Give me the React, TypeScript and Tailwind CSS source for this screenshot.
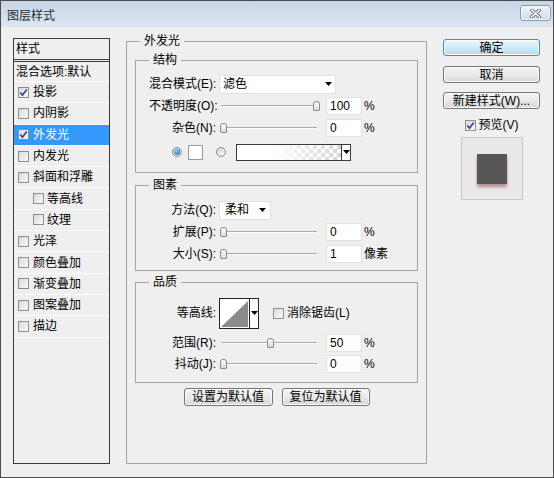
import type { ReactNode } from "react";

const styles = [
  { label: "投影", checked: true },
  { label: "内阴影" },
  { label: "外发光", checked: true, active: true },
  { label: "内发光" },
  { label: "斜面和浮雕" },
  { label: "等高线", indent: true },
  { label: "纹理", indent: true },
  { label: "光泽" },
  { label: "颜色叠加" },
  { label: "渐变叠加" },
  { label: "图案叠加" },
  { label: "描边" },
];

const Arrow = () => (
  <svg width="7" height="4" viewBox="0 0 7 4">
    <path d="M0 0H7L3.5 4Z" fill="#000" />
  </svg>
);

const Check = ({ checked = false }: { checked?: boolean }) => (
  <span className="flex h-[11px] w-[11px] shrink-0 items-center justify-center border border-[#8f8f8f] bg-linear-to-br from-[#d9d9d9] to-[#fbfbfb]">
    {checked && (
      <svg width="9" height="9" viewBox="0 0 9 9">
        <path d="M1.3 4.6L3.4 7.2L7.8 1.4" fill="none" stroke="#2a3f96" strokeWidth="1.6" />
      </svg>
    )}
  </span>
);

const Radio = ({ on = false }: { on?: boolean }) => (
  <span className="flex h-[10px] w-[10px] shrink-0 items-center justify-center rounded-full border border-[#8c8c8c] bg-linear-to-br from-[#cfcfcf] to-[#fafafa]">
    {on && (
      <span className="h-[6px] w-[6px] rounded-full bg-[radial-gradient(circle_at_35%_35%,#8fdcff,#1b73b8_75%)]" />
    )}
  </span>
);

const Slider = ({ value }: { value: number }) => (
  <div className="relative ml-[3px] h-[12px] w-[101px] shrink-0">
    <div className="absolute left-[2px] right-[3px] top-[5px] h-[2px] border-t border-[#a9a9a9] bg-white" />
    <div
      className="absolute top-[1px] h-[10px] w-[7px] rounded-t-[3px] rounded-b-[1px] border border-[#8a8a8a] bg-linear-to-b from-white to-[#d8d8d8]"
      style={{ left: 1 + value * 0.93 }}
    />
  </div>
);

const NumField = ({ value }: { value: string }) => (
  <div className="ml-[6px] flex h-[18px] w-[36px] shrink-0 items-center border border-[#e1e1e1] bg-white pl-[3px]">
    {value}
  </div>
);

const Row = ({
  label,
  children,
  className = "h-[22px]",
}: {
  label: string;
  children: ReactNode;
  className?: string;
}) => (
  <div className={`flex items-center ${className}`}>
    <span className="w-[67px] shrink-0 whitespace-nowrap text-right">{label}</span>
    {children}
  </div>
);

const SliderRow = ({
  label,
  value,
  num,
  unit = "%",
  className,
}: {
  label: string;
  value: number;
  num: string;
  unit?: string;
  className?: string;
}) => (
  <Row label={label} className={className}>
    <Slider value={value} />
    <NumField value={num} />
    <span className="ml-[2px] whitespace-nowrap">{unit}</span>
  </Row>
);

const Group = ({
  title,
  className = "",
  children,
}: {
  title: string;
  className?: string;
  children: ReactNode;
}) => (
  <fieldset className={`border border-[#a5a5a5] pl-[13px] ${className}`}>
    <legend className="px-[4px] leading-[14px]">{title}</legend>
    {children}
  </fieldset>
);

const Btn = ({
  children,
  className = "",
  primary = false,
}: {
  children: ReactNode;
  className?: string;
  primary?: boolean;
}) => (
  <button
    type="button"
    className={`flex items-center justify-center rounded-[3px] border leading-none shadow-[inset_0_0_0_1px_#fbfbfb] ${
      primary
        ? "border-[#3c8fd0] bg-linear-to-b from-[#eaf6fd] to-[#b4def5] shadow-[0_0_2px_#7cc8f2]"
        : "border-[#767676] bg-linear-to-b from-[#f4f4f4] via-[#eaeaea] to-[#d6d6d6]"
    } ${className}`}
  >
    {children}
  </button>
);

export default function App() {
  return (
    <div className="flex h-[478px] w-[554px] flex-col border border-[#4d4d4d] bg-[#efefef] font-['Liberation_Sans','Noto_Sans_CJK_SC',sans-serif] text-[12px] leading-[14px] text-black">
      {/* title bar */}
      <div className="flex h-[26px] shrink-0 items-start justify-between bg-linear-to-b from-[#c7d6e8] to-[#dce6f0] pl-[6px] pr-[2px]">
        <span className="mt-[8px] text-[#2b2b2b]">图层样式</span>
        <div className="mt-[4px] flex h-[16px] w-[31px] items-center justify-center rounded-[3px] border border-[#8d9bae] bg-linear-to-b from-[#f1f5fa] to-[#d0dae6] shadow-[inset_0_0_0_1px_#f6f9fc]">
          <svg width="11" height="9" viewBox="0 0 11 9">
            <path d="M1.5 1L9.5 8M9.5 1L1.5 8" stroke="#66717f" strokeWidth="3.4" strokeLinecap="round" />
            <path d="M1.5 1L9.5 8M9.5 1L1.5 8" stroke="#ffffff" strokeWidth="1.6" strokeLinecap="round" />
          </svg>
        </div>
      </div>

      <div className="flex flex-1 items-start pl-[12px]">
        {/* styles list */}
        <div className="mt-[11px] flex h-[426px] w-[97px] shrink-0 flex-col border border-[#3b3b3b]">
          <div className="flex h-[23px] items-center border-b-[3px] border-double border-[#3b3b3b] pl-[2px]">
            样式
          </div>
          <div className="flex h-[20px] items-center border-b border-white pl-[2px] whitespace-nowrap">
            混合选项:默认
          </div>
          {styles.map((s) => (
            <div
              key={s.label}
              className={`flex h-[21.3px] items-center border-b border-white ${s.indent ? "gap-[3px] pl-[19px]" : "gap-[4px] pl-[4px]"} ${
                s.active ? "bg-[#3399ff] text-white" : ""
              }`}
            >
              <Check checked={s.checked} />
              <span className="whitespace-nowrap">{s.label}</span>
            </div>
          ))}
        </div>

        {/* settings */}
        <fieldset className="ml-[16px] mt-[7px] h-[430px] w-[301px] shrink-0 border border-[#a5a5a5] pl-[13px] pr-[8px] pt-[5px]">
          <legend className="px-[4px] leading-[14px]">外发光</legend>

          <div className="-ml-[5px]">
            <Group title="结构" className="pt-[6px] pb-[9px]">
              <Row label="混合模式(E):">
                <div className="ml-[3px] flex h-[19px] w-[117px] items-center justify-between border border-[#e1e1e1] bg-white pl-[3px] pr-[3px]">
                  <span>滤色</span>
                  <Arrow />
                </div>
              </Row>
              <SliderRow label="不透明度(O):" value={100} num="100" />
              <SliderRow label="杂色(N):" value={0} num="0" />
              <div className="mt-[2px] flex h-[22px] items-center pl-[23px]">
                <Radio on />
                <span className="ml-[6px] h-[15px] w-[15px] border border-[#9a9a9a] bg-white" />
                <span className="ml-[13px]">
                  <Radio />
                </span>
                <div className="ml-[10px] flex h-[17px] w-[115px] border border-[#3a3a3a]">
                  <div className="flex-1 bg-[conic-gradient(#d4d4d4_25%,#ffffff_0_50%,#d4d4d4_0_75%,#ffffff_0)] bg-[length:8px_8px]">
                    <div className="h-full w-full bg-linear-to-r from-white from-35% to-transparent" />
                  </div>
                  <div className="flex w-[9px] items-center justify-center border-l border-[#3a3a3a] bg-white">
                    <Arrow />
                  </div>
                </div>
              </div>
            </Group>

            <Group title="图素" className="mt-[5px] pt-[7px] pb-[5px]">
              <Row label="方法(Q):">
                <div className="ml-[3px] flex h-[19px] w-[52px] items-center justify-between border border-[#e1e1e1] bg-white pl-[5px] pr-[4px]">
                  <span>柔和</span>
                  <Arrow />
                </div>
              </Row>
              <SliderRow label="扩展(P):" value={0} num="0" />
              <SliderRow label="大小(S):" value={0} num="1" unit="像素" />
            </Group>

            <Group title="品质" className="mt-[4px] pt-[8px] pb-[7px]">
              <Row label="等高线:" className="h-[32px]">
                <div className="ml-[3px] flex h-[31px] w-[40px] border border-[#222]">
                  <svg width="29" height="29" viewBox="0 0 29 29" className="bg-white">
                    <polygon points="1,28 28,2 28,28" fill="#8b8b8b" />
                  </svg>
                  <div className="flex w-[9px] items-center justify-center border-l border-[#222] bg-white">
                    <Arrow />
                  </div>
                </div>
                <span className="ml-[14px]">
                  <Check />
                </span>
                <span className="ml-[3px] whitespace-nowrap">消除锯齿(L)</span>
              </Row>
              <SliderRow label="范围(R):" value={50} num="50" className="mt-[3px] h-[21px]" />
              <SliderRow label="抖动(J):" value={0} num="0" />
            </Group>

            <div className="mt-[5px] flex justify-center gap-[9px]">
              <Btn className="h-[18px] w-[89px]">设置为默认值</Btn>
              <Btn className="h-[18px] w-[88px]">复位为默认值</Btn>
            </div>
          </div>
        </fieldset>

        {/* right column */}
        <div className="ml-[16px] mt-[12px] flex w-[97px] shrink-0 flex-col items-center">
          <Btn primary className="h-[17px] w-full">
            确定
          </Btn>
          <Btn className="mt-[10px] h-[17px] w-full">取消</Btn>
          <Btn className="mt-[9px] h-[17px] w-full whitespace-nowrap">新建样式(W)...</Btn>
          <div className="mt-[9px] flex h-[14px] items-center gap-[3px]">
            <Check checked />
            <span className="whitespace-nowrap">预览(V)</span>
          </div>
          <div className="mt-[5px] flex h-[63px] w-[62px] items-center justify-center border border-[#c8c8c8] bg-[#e9e9e9]">
            <div className="h-[30px] w-[30px] bg-[#565656] shadow-[0_3px_3px_rgba(140,70,70,0.55)]" />
          </div>
        </div>
      </div>
    </div>
  );
}
